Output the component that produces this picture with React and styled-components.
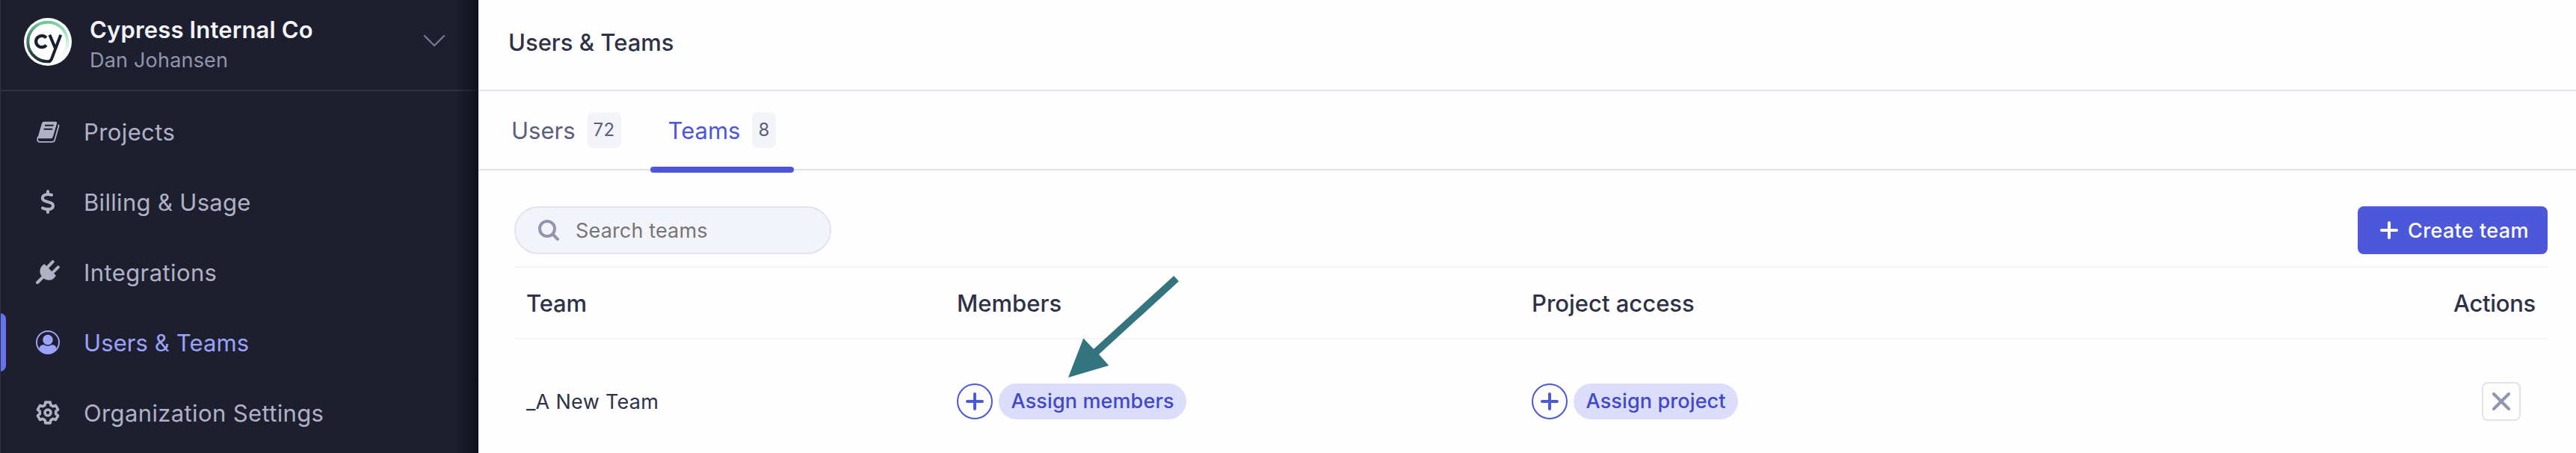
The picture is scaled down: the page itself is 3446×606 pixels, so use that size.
import React from "react";
import styled, { createGlobalStyle } from "styled-components";
import { FaDollarSign } from "react-icons/fa6";

const c = {
  navy: "#1d1f2e",
  navyLine: "#2f3246",
  navText: "#afb2c7",
  navActive: "#9ba2f9",
  accent: "#6672ee",
  indigo: "#4c57da",
  indigoDark: "#4049c7",
  indigoSoft: "#dcddfa",
  ink: "#2f3246",
  slate: "#5c5f79",
  muted: "#9195ad",
  line: "#e0e3ed",
  soft: "#f3f4fa",
};

const GlobalStyle = createGlobalStyle`
  *, *::before, *::after { box-sizing: border-box; }
  body { margin: 0; background: #fefefe; font-family: Inter, "Liberation Sans", sans-serif; }
  svg { display: block; flex: none; }
`;

const Page = styled.div`
  display: flex;
  height: 606px;
  overflow: hidden;
`;

/* Sidebar */
const Sidebar = styled.aside`
  position: relative;
  display: flex;
  flex-direction: column;
  flex: none;
  width: 640px;
  background: ${c.navy};
  &::after {
    content: "";
    position: absolute;
    inset: 0;
    border-left: 1px solid ${c.navyLine};
    background: linear-gradient(to left, rgba(8, 6, 12, 0.62), rgba(8, 6, 12, 0.3) 14px, rgba(8, 6, 12, 0) 32px) right / 36px 100% no-repeat;
    pointer-events: none;
  }
`;

const OrgSwitcher = styled.header`
  display: flex;
  flex: none;
  align-items: flex-start;
  height: 122px;
  padding: 20px 44px 0 32px;
  border-bottom: 2px solid ${c.navyLine};
`;

const OrgLogo = styled.svg`
  width: 64px;
  height: 64px;
  margin-top: 4px;
`;

const OrgText = styled.div`
  flex: 1;
  margin-left: 24px;
`;

const OrgName = styled.div`
  color: #f3f4fa;
  font-size: 31px;
  font-weight: 600;
  line-height: 40px;
  letter-spacing: 0.15px;
`;

const OrgUser = styled.div`
  color: ${c.muted};
  font-size: 27px;
  line-height: 41px;
  letter-spacing: 0.2px;
`;

const OrgChevron = styled.svg`
  width: 30px;
  height: 18px;
  margin-top: 25px;
`;

const Nav = styled.nav`
  display: flex;
  flex-direction: column;
  flex: none;
  gap: 16px;
  padding-top: 15px;
`;

const NavItem = styled.a`
  position: relative;
  display: flex;
  align-items: center;
  gap: 32px;
  height: 78px;
  padding-left: 48px;
  color: ${(p) => (p.$active ? c.navActive : c.navText)};
  font-size: 31px;
  letter-spacing: ${(p) => p.$track}px;
  white-space: nowrap;
  &::before {
    content: "";
    position: absolute;
    left: 0;
    top: 0;
    width: 8px;
    height: 100%;
    border-radius: 0 8px 8px 0;
    background: ${(p) => (p.$active ? c.accent : "transparent")};
  }
`;

const NavLabel = styled.span`
  padding-top: 1px;
`;

const NavIcon = styled.svg`
  width: 32px;
  height: 32px;
`;

const IconSlot = styled.span`
  display: flex;
  justify-content: center;
  width: 32px;
  font-size: 32px;
`;

/* Main column */
const Main = styled.main`
  display: flex;
  flex-direction: column;
  flex: 1;
  min-width: 0;
`;

const PageHeader = styled.header`
  flex: none;
  height: 122px;
  padding: 37px 40px 0;
  border-bottom: 2px solid ${c.line};
`;

const PageTitle = styled.h1`
  margin: 0;
  color: ${c.ink};
  font-size: 31px;
  font-weight: 500;
  line-height: 40px;
`;

const Tabs = styled.div`
  display: flex;
  flex: none;
  gap: 15px;
  height: 106px;
  padding-left: 20px;
  border-bottom: 2px solid ${c.line};
`;

const Tab = styled.a`
  position: relative;
  display: flex;
  align-items: center;
  gap: 16px;
  padding: 0 24px;
  color: ${(p) => (p.$active ? c.indigo : c.slate)};
  font-size: 31px;
  &::after {
    content: "";
    position: absolute;
    left: 0;
    right: 0;
    bottom: -5px;
    height: 8px;
    border-radius: 4px;
    background: ${(p) => (p.$active ? c.indigo : "transparent")};
  }
`;

const Count = styled.span`
  height: 48px;
  padding: 0 8px;
  border-radius: 8px;
  background: ${c.soft};
  color: ${c.slate};
  font-size: 24px;
  line-height: 48px;
  letter-spacing: 0.4px;
`;

const Content = styled.section`
  flex: none;
  padding: 48px 38px 0 48px;
`;

const Toolbar = styled.div`
  display: flex;
  justify-content: space-between;
  padding-bottom: 16px;
`;

const SearchBox = styled.label`
  display: flex;
  align-items: center;
  gap: 22px;
  width: 424px;
  height: 64px;
  padding: 1px 30px 0;
  border: 2px solid ${c.line};
  border-radius: 32px;
  background: ${c.soft};
  color: #757575;
  font-size: 27px;
  letter-spacing: 0.15px;
`;

const SearchIcon = styled.svg`
  width: 28px;
  height: 28px;
  margin-top: -1px;
`;

const CreateButton = styled.button`
  display: flex;
  align-items: center;
  gap: 13px;
  width: 254px;
  height: 64px;
  padding: 0 0 0 30px;
  border: 0;
  border-radius: 8px;
  background: ${c.indigo};
  color: #fff;
  font: 500 27px Inter, "Liberation Sans", sans-serif;
  letter-spacing: 0.4px;
  white-space: nowrap;
`;

const TableRow = styled.div`
  display: grid;
  grid-template-columns: 576px 769px 1fr auto;
  align-items: center;
  height: ${(p) => (p.$head ? 98 : 166)}px;
  padding: 0 16px;
  color: ${c.ink};
  font-size: ${(p) => (p.$head ? 31 : 27)}px;
  font-weight: ${(p) => (p.$head ? 500 : 400)};
  border: 0 solid ${c.soft};
  border-width: ${(p) => (p.$head ? "2px 0" : "0")};
`;

const HeadCell = styled.span`
  letter-spacing: ${(p) => p.$track || 0}px;
`;

const TeamName = styled.span`
  letter-spacing: 0.3px;
`;

const Assign = styled.div`
  display: flex;
  align-items: center;
  gap: 8px;
`;

const AddCircle = styled.span`
  display: flex;
  align-items: center;
  justify-content: center;
  width: 48px;
  height: 48px;
  border: 2px solid ${c.indigo};
  border-radius: 50%;
  color: ${c.indigo};
`;

const Pill = styled.span`
  height: 48px;
  padding: 0 16.5px;
  border-radius: 24px;
  background: ${c.indigoSoft};
  color: ${c.indigoDark};
  font-weight: 500;
  line-height: 48px;
  letter-spacing: 0.12px;
`;

const RemoveButton = styled.button`
  display: flex;
  align-items: center;
  justify-content: center;
  width: 52px;
  height: 52px;
  margin: 0 20px 0 0;
  padding: 0;
  border: 2px solid ${c.line};
  border-radius: 8px;
  background: transparent;
  color: ${c.muted};
`;

const Pointer = styled.svg`
  position: absolute;
  left: 1429px;
  top: 369px;
  width: 148px;
  height: 136px;
  pointer-events: none;
`;

function Plus() {
  return (
    <svg width="24" height="24" viewBox="0 0 24 24" stroke="currentColor" strokeWidth="4" strokeLinecap="round">
      <path d="M12 2V22M2 12H22" />
    </svg>
  );
}

function Cross() {
  return (
    <svg width="24" height="24" viewBox="0 0 24 24" stroke="currentColor" strokeWidth="4" strokeLinecap="round">
      <path d="M2 2L22 22M22 2L2 22" />
    </svg>
  );
}

function Logo() {
  return (
    <OrgLogo viewBox="0 0 64 64" fill="none">
      <defs>
        <linearGradient id="ringLeft" gradientUnits="userSpaceOnUse" x1="30" y1="58" x2="30" y2="5">
          <stop offset="0" stopColor="#1d2a31" />
          <stop offset="0.3" stopColor="#36594f" />
          <stop offset="0.7" stopColor="#55957a" />
          <stop offset="1" stopColor="#72cb9e" />
        </linearGradient>
        <linearGradient id="ringRight" gradientUnits="userSpaceOnUse" x1="34" y1="6" x2="48" y2="53">
          <stop offset="0" stopColor="#72cb9e" />
          <stop offset="0.5" stopColor="#b3e6cc" />
          <stop offset="1" stopColor="#ffffff" />
        </linearGradient>
      </defs>
      <circle cx="32" cy="32" r="32" fill="#fff" />
      <path d="M32 5.8A26.2 26.2 0 0 1 48 52.8" stroke="url(#ringRight)" strokeWidth="4" />
      <path d="M35.4 57.9A26.2 26.2 0 1 1 32 5.8" stroke="url(#ringLeft)" strokeWidth="4" />
      <path d="M29.8 26.6A7.7 7.7 0 1 0 29.8 36.4" stroke="#1b1e2e" strokeWidth="4.2" />
      <path d="M34.4 22.6L42.2 41M49.2 22.6L37.2 54.4Q36 57.9 33 58" stroke="#1b1e2e" strokeWidth="4" />
    </OrgLogo>
  );
}

function BookIcon() {
  return (
    <NavIcon viewBox="0 0 32 32" fill="none">
      <path d="M10.7 2.8H26.4Q28.7 2.8 28 5.2L23 22.4Q22.2 25.2 19.6 25.2H4.6Q2.2 25.2 2.8 22.8L8 5Q8.7 2.8 10.7 2.8Z" fill="currentColor" />
      <path d="M2.8 23Q.6 29.8 5.4 29.8H21.8Q24.4 29.8 25.2 27.2L30.4 8.8Q30.6 7.6 30 6.6" stroke="currentColor" strokeWidth="1.8" />
      <path d="M12 7.8H23.6M10.6 12.8H22.2" stroke={c.navy} strokeWidth="2" />
    </NavIcon>
  );
}

function PlugIcon() {
  return (
    <NavIcon viewBox="0 0 32 32" fill="none" stroke="currentColor" strokeLinecap="round">
      <path d="M16 9L22.6 2.2M23 16.2L29.8 9.4" strokeWidth="4" />
      <path d="M11.2 6L26 20.8L24.6 22.4C21.6 27 14.4 27.4 9.6 22.4C4.8 17.6 5.2 11 9.8 7.4Z" fill="currentColor" strokeWidth="1.6" strokeLinejoin="round" />
      <path d="M10 22L2 30" strokeWidth="4" />
    </NavIcon>
  );
}

function UserIcon() {
  return (
    <NavIcon viewBox="0 0 32 32" fill="none">
      <path d="M4.6 26V23.4C5.2 20.4 7.6 19.4 10.4 19.2H21.6C24.4 19.4 26.8 20.4 27.4 23.4V26C24.4 29.4 20.6 31 16 31C11.4 31 7.6 29.4 4.6 26Z" fill="currentColor" />
      <circle cx="16" cy="12.6" r="7.6" fill="currentColor" stroke={c.navy} strokeWidth="1.6" />
      <circle cx="16" cy="16" r="15" stroke="currentColor" strokeWidth="2" />
    </NavIcon>
  );
}

function GearIcon() {
  const points = [0, 60, 120, 180, 240, 300]
    .flatMap((a) => [[a - 21, 10.8], [a - 13, 14.2], [a + 13, 14.2], [a + 21, 10.8]])
    .map(([a, r]) => {
      const t = (a * Math.PI) / 180;
      return `${(16 + r * Math.sin(t)).toFixed(2)},${(16 - r * Math.cos(t)).toFixed(2)}`;
    })
    .join(" ");
  return (
    <NavIcon viewBox="0 0 32 32" fill="none" stroke="currentColor" strokeLinejoin="round">
      <polygon points={points} strokeWidth="3.6" />
      <circle cx="16" cy="16" r="4" strokeWidth="3.6" />
    </NavIcon>
  );
}

const navItems = [
  { label: "Projects", icon: <BookIcon />, track: 0.4 },
  { label: "Billing & Usage", icon: <IconSlot><FaDollarSign /></IconSlot>, track: 0.32 },
  { label: "Integrations", icon: <PlugIcon />, track: 0.4 },
  { label: "Users & Teams", icon: <UserIcon />, track: 0.1, active: true },
  { label: "Organization Settings", icon: <GearIcon />, track: 0.37 },
];

export default function App() {
  return (
    <>
      <GlobalStyle />
      <Page>
        <Sidebar>
          <OrgSwitcher>
            <Logo />
            <OrgText>
              <OrgName>Cypress Internal Co</OrgName>
              <OrgUser>Dan Johansen</OrgUser>
            </OrgText>
            <OrgChevron viewBox="0 0 30 18" fill="none" stroke="#747893" strokeWidth="2.4" strokeLinecap="round" strokeLinejoin="round">
              <path d="M2 3L15 16L28 3" />
            </OrgChevron>
          </OrgSwitcher>
          <Nav>
            {navItems.map((item) => (
              <NavItem key={item.label} $active={item.active} $track={item.track}>
                {item.icon}
                <NavLabel>{item.label}</NavLabel>
              </NavItem>
            ))}
          </Nav>
        </Sidebar>
        <Main>
          <PageHeader>
            <PageTitle>Users &amp; Teams</PageTitle>
          </PageHeader>
          <Tabs>
            <Tab>
              Users<Count>72</Count>
            </Tab>
            <Tab $active>
              Teams<Count>8</Count>
            </Tab>
          </Tabs>
          <Content>
            <Toolbar>
              <SearchBox>
                <SearchIcon viewBox="0 0 28 28" fill="none" stroke={c.muted} strokeWidth="4" strokeLinecap="round">
                  <circle cx="12" cy="12" r="10" />
                  <path d="M19.5 19.5L26 26" />
                </SearchIcon>
                <span>Search teams</span>
              </SearchBox>
              <CreateButton>
                <Plus />
                Create team
              </CreateButton>
            </Toolbar>
            <TableRow $head>
              <HeadCell $track={-0.15}>Team</HeadCell>
              <HeadCell>Members</HeadCell>
              <HeadCell>Project access</HeadCell>
              <HeadCell $track={-0.3}>Actions</HeadCell>
            </TableRow>
            <TableRow>
              <TeamName>_A New Team</TeamName>
              <Assign>
                <AddCircle><Plus /></AddCircle>
                <Pill>Assign members</Pill>
              </Assign>
              <Assign>
                <AddCircle><Plus /></AddCircle>
                <Pill>Assign project</Pill>
              </Assign>
              <RemoveButton><Cross /></RemoveButton>
            </TableRow>
          </Content>
        </Main>
        <Pointer viewBox="0 0 148 136" fill="#34747e">
          <path d="M0 136L20.3 83.4L34 98L141.3 0L148 7.3L41 105L54.3 120Z" />
        </Pointer>
      </Page>
    </>
  );
}
